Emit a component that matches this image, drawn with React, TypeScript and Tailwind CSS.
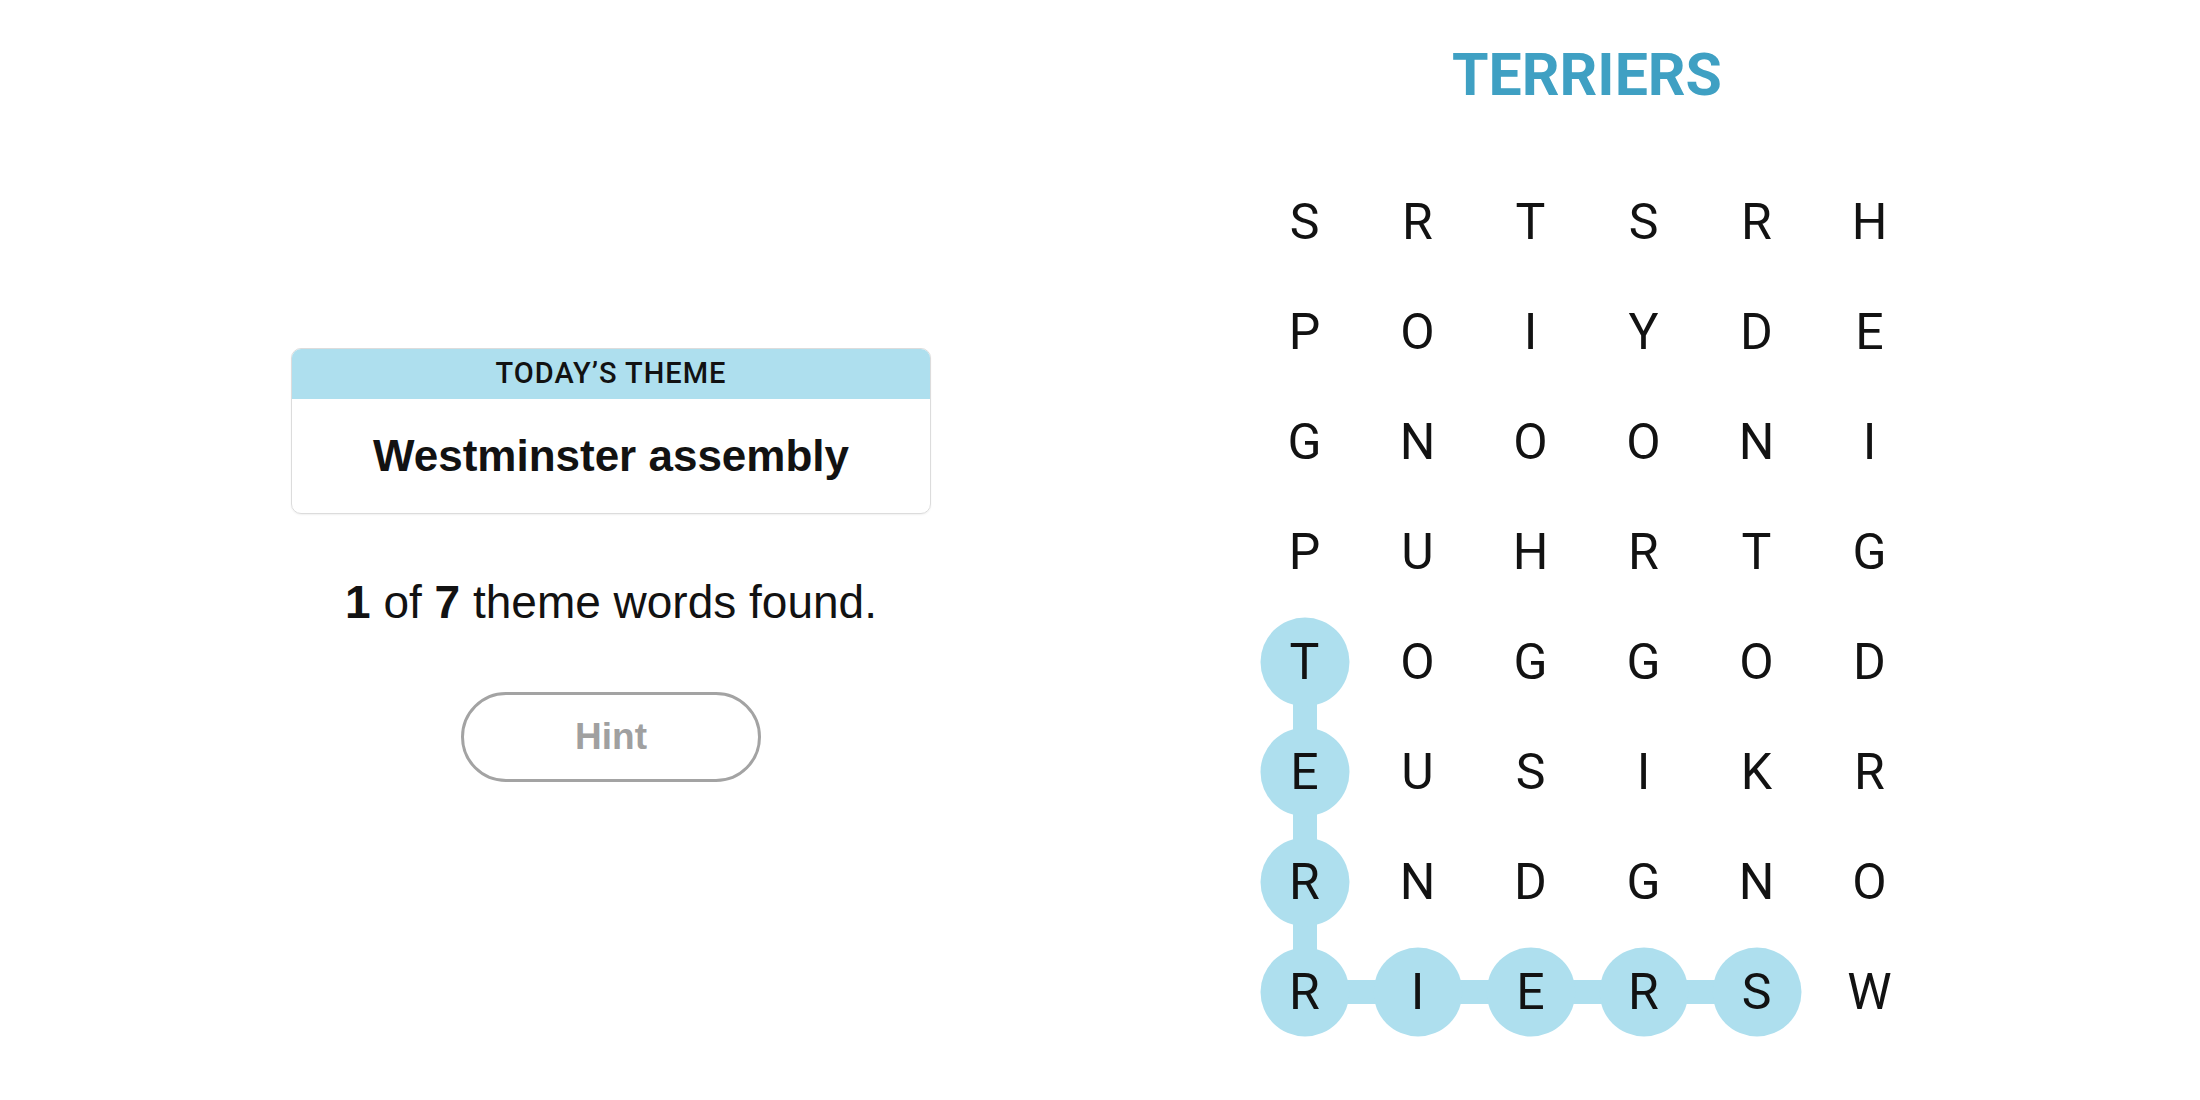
import React from "react";

const rows = [
  "SRTSRH",
  "POIYDE",
  "GNOONI",
  "PUHRTG",
  "TOGGOD",
  "EUSIKR",
  "RNDGNO",
  "RIERSW",
];

// found word path: TERRIERS
const path: [number, number][] = [
  [4, 0],
  [5, 0],
  [6, 0],
  [7, 0],
  [7, 1],
  [7, 2],
  [7, 3],
  [7, 4],
];

const key = (r: number, c: number) => `${r}-${c}`;
const found = new Set(path.map(([r, c]) => key(r, c)));
const linkDown = new Set<string>();
const linkRight = new Set<string>();
path.slice(1).forEach(([r, c], i) => {
  const [pr, pc] = path[i];
  if (r === pr + 1 && c === pc) linkDown.add(key(pr, pc));
  if (r === pr && c === pc + 1) linkRight.add(key(pr, pc));
});

const sans = "font-['Liberation_Sans',Arial,sans-serif]";
const game = "font-['Roboto','Liberation_Sans',sans-serif]";

function Cell({ r, c, letter }: { r: number; c: number; letter: string }) {
  const k = key(r, c);
  const on = found.has(k);
  return (
    <div className="relative flex h-[110px] items-center justify-center">
      {linkDown.has(k) && (
        <span className="absolute left-1/2 top-1/2 h-[110px] w-[24px] -translate-x-1/2 bg-[#aedfee]" />
      )}
      {linkRight.has(k) && (
        <span className="absolute left-1/2 top-1/2 h-[24px] w-[113px] -translate-y-1/2 bg-[#aedfee]" />
      )}
      {on && (
        <span className="absolute left-1/2 top-1/2 size-[89px] -translate-x-1/2 -translate-y-1/2 rounded-full bg-[#aedfee]" />
      )}
      <span className={`relative text-[50px] leading-none text-[#121212] ${game}`}>{letter}</span>
    </div>
  );
}

export default function App() {
  return (
    <div className="flex min-h-[1100px] w-[2200px] bg-white pl-[291px]">
      <section className="flex w-[640px] flex-col items-center pt-[348px]">
        <div className="w-[640px] overflow-hidden rounded-[10px] border border-[#dcdcdc] shadow-[0_1px_2px_rgba(0,0,0,0.06)]">
          <div className={`flex h-[50px] items-center justify-center bg-[#aedfee] text-[29px] font-medium uppercase tracking-[1px] text-[#121212] ${game}`}>
            Today’s Theme
          </div>
          <div className={`flex h-[114px] items-center justify-center text-[44px] font-bold text-[#121212] ${sans}`}>
            Westminster assembly
          </div>
        </div>
        <p className={`mt-[65px] text-[46px] leading-none text-[#121212] ${sans}`}>
          <b>1</b> of <b>7</b> theme words found.
        </p>
        <button
          className={`mt-[67px] flex h-[90px] w-[300px] items-center justify-center rounded-full border-[3px] border-[#a3a3a3] text-[37px] font-bold text-[#a0a0a0] ${sans}`}
        >
          Hint
        </button>
      </section>

      <section className="ml-[317px] flex w-[678px] flex-col items-center pt-[45px]">
        <h1 className={`text-[59px] font-bold uppercase leading-none text-[#3fa0c3] ${game}`}>Terriers</h1>
        <div className="mt-[63px] grid w-[678px] grid-cols-6">
          {rows.map((row, r) =>
            row.split("").map((letter, c) => <Cell key={key(r, c)} r={r} c={c} letter={letter} />)
          )}
        </div>
      </section>
    </div>
  );
}
